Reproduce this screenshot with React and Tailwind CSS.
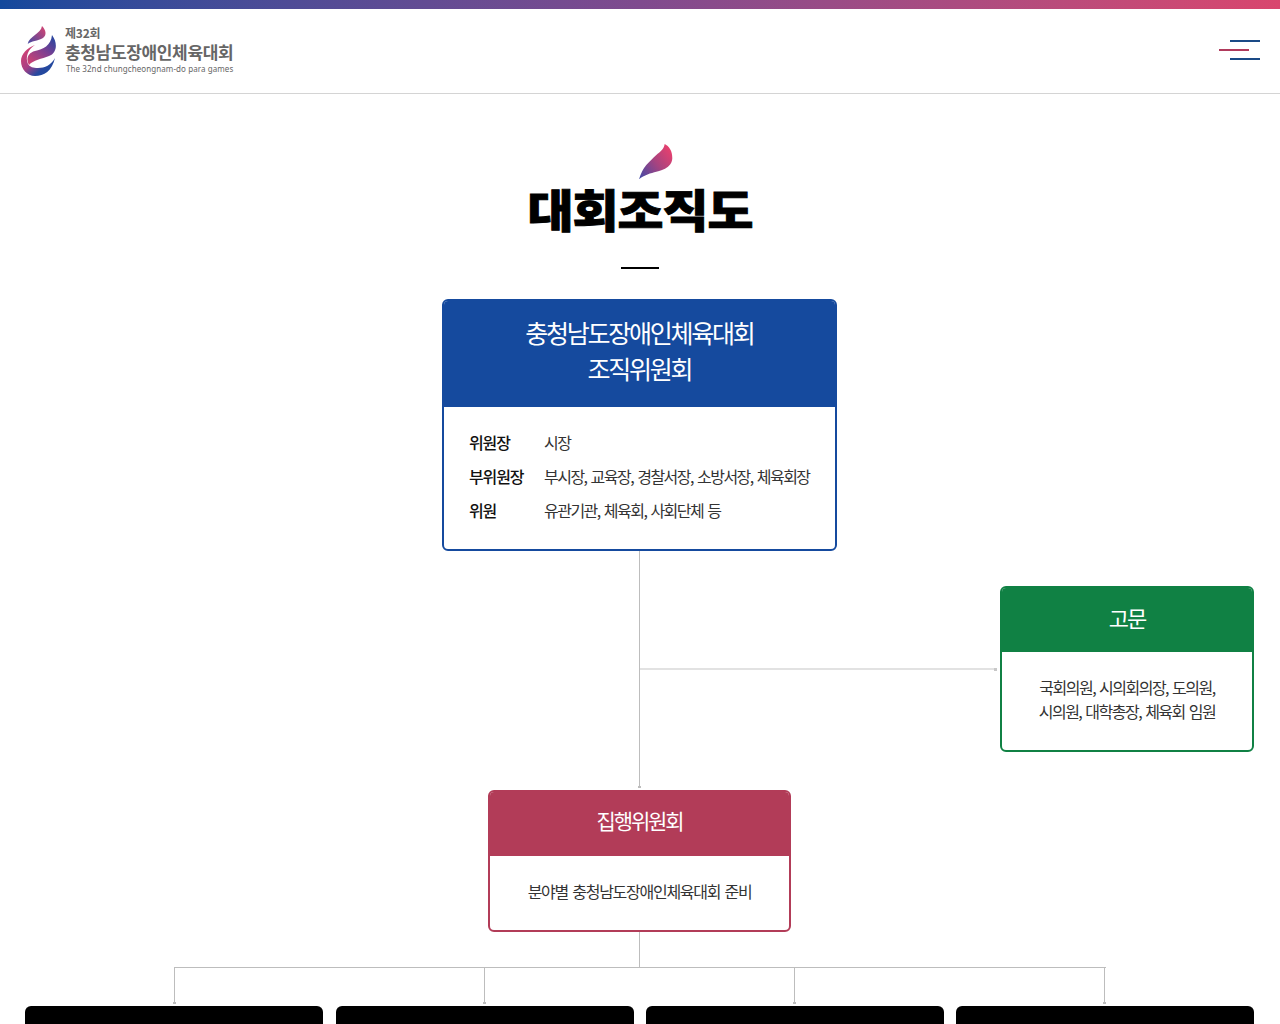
import React from 'react';

const font = { fontFamily: '"Noto Sans CJK KR", "Noto Sans", sans-serif' };

const FlameLogo = () => (
  <svg viewBox="0 0 36 50" className="w-[36px] h-[50px] shrink-0">
    <defs>
      <linearGradient id="lg1" x1="0" y1="1" x2="1" y2="0">
        <stop offset="0" stopColor="#3f4aa3" />
        <stop offset="1" stopColor="#dc4470" />
      </linearGradient>
      <linearGradient id="lg2" x1="0" y1="1" x2="0.8" y2="0">
        <stop offset="0" stopColor="#d9436f" />
        <stop offset="0.6" stopColor="#7a3f92" />
        <stop offset="1" stopColor="#2b469f" />
      </linearGradient>
      <linearGradient id="lg3" x1="0" y1="0" x2="1" y2="1">
        <stop offset="0" stopColor="#e0426e" />
        <stop offset="0.45" stopColor="#a83f84" />
        <stop offset="0.7" stopColor="#26489f" />
        <stop offset="1" stopColor="#1c4a9e" />
      </linearGradient>
    </defs>
    <path d="M21 0C25 4 26 9 22 12 17 15 10 15 6.7 18 8 10 20 8 21 0Z" fill="url(#lg1)" />
    <path d="M31 9C37 17 36 27 28 30 21 33 12 34 8 39 5 34 6 27 14 25 22 23 30 20 31 9Z" fill="url(#lg2)" />
    <path d="M14 19C6 22 0 28 0 35 0 43 6 50 14 50 23 50 31 45 34 32 30 39 24 42 17 42 12 42 9 41 7 38 4 31 7 23 14 19Z" fill="url(#lg3)" />
  </svg>
);

const SectionMark = () => (
  <svg viewBox="0 0 34 36" className="w-[34px] h-[36px] block">
    <defs>
      <linearGradient id="mark" x1="0" y1="1" x2="1" y2="0.2">
        <stop offset="0" stopColor="#3f4aa8" />
        <stop offset="0.55" stopColor="#a8437f" />
        <stop offset="1" stopColor="#e8406e" />
      </linearGradient>
    </defs>
    <path d="M25.7 0C30 2 33.5 7 33.3 14.3 33 19 31 21 29 22.7 25 26 21 26.5 17.3 27.7 12 29 5 31 0 35.3 2 29 4 25 7.3 21 11 17 14 14 17.3 11 21 8 25 5 25.7 0Z" fill="url(#mark)" />
  </svg>
);

const Row = ({ label, children }) => (
  <div className="flex h-[34px] items-center">
    <span className="w-[75px] shrink-0 text-[16px] font-medium tracking-[-0.07em] text-[#111]">{label}</span>
    <span className="text-[16px] tracking-[-0.095em] [word-spacing:2px] text-[#333] whitespace-nowrap">{children}</span>
  </div>
);

const Drop = () => (
  <div className="flex flex-col items-center w-[298px]">
    <div className="w-px h-[34px] bg-[#bdbdbd]" />
    <div className="w-[3px] h-[2px] bg-[#bdbdbd]" />
  </div>
);

const App = () => (
  <div style={font} className="h-[1024px] overflow-hidden bg-white">
    <div className="h-[9px] bg-gradient-to-r from-[#12499c] via-[#7f4a8e] to-[#d9466e]" />
    <header className="h-[85px] border-b border-[#d4d4d4] flex items-center justify-between pl-[21px] pr-[20px]">
      <div className="flex items-center gap-[8px]">
        <FlameLogo />
        <div className="flex flex-col text-[#666] -mt-[2px]">
          <span className="text-[12px] leading-[13px] font-bold tracking-[-0.02em] mb-[2px] mt-[1px]">제32회</span>
          <span className="text-[17px] leading-[22px] font-bold tracking-[-0.02em] whitespace-nowrap">충청남도장애인체육대회</span>
          <span className="text-[8px] leading-[12px] ml-[1px] tracking-[0.01em] whitespace-nowrap" style={{ fontFamily: '"Noto Sans", sans-serif' }}>The 32nd chungcheongnam-do para games</span>
        </div>
      </div>
      <div className="flex flex-col items-end gap-[7px] -mt-[2px]">
        <div className="w-[30px] h-[2px] bg-[#1a4a86]" />
        <div className="w-[30px] h-[2px] bg-[#b03a5c] mr-[11px]" />
        <div className="w-[30px] h-[2px] bg-[#1a4a86]" />
      </div>
    </header>

    <div className="flex flex-col items-center pt-[50px]">
      <div className="ml-[32px]">
        <SectionMark />
      </div>
      <h1 className="text-[50px] leading-[60px] font-black text-black tracking-[-0.02em] -mt-[2px] scale-y-[0.9] [-webkit-text-stroke:1px_black]">대회조직도</h1>
      <div className="w-[38px] h-[2px] bg-black mt-[29px]" />
    </div>

    <div className="flex flex-col items-center mt-[30px] pr-[1px]">
      <section className="w-[395px] h-[252px] rounded-[6px] border-2 border-[#154a9e] overflow-hidden">
        <div className="h-[106px] pb-[8px] bg-[#154a9e] text-white text-[25px] leading-[36px] tracking-[-0.09em] flex flex-col items-center justify-center">
          <div>충청남도장애인체육대회</div>
          <div>조직위원회</div>
        </div>
        <div className="pt-[18px] pl-[25px]">
          <Row label="위원장">시장</Row>
          <Row label="부위원장">부시장, 교육장, 경찰서장, 소방서장, 체육회장</Row>
          <Row label="위원">유관기관, 체육회, 사회단체 등</Row>
        </div>
      </section>
    </div>

    <div className="flex h-[239px]">
      <div className="w-[639px] shrink-0" />
      <div className="flex flex-col items-center w-px shrink-0">
        <div className="w-px h-[235px] shrink-0 bg-[#bdbdbd]" />
        <div className="w-[3px] h-[2px] shrink-0 bg-[#bdbdbd]" />
      </div>
      <div className="flex items-start pt-[35px]">
        <div className="flex items-center h-[166px] w-[360px] shrink-0">
          <div className="w-[354px] h-[2px] bg-[#e2e2e2] shrink-0" />
          <div className="w-[3px] h-[3px] bg-[#c8c8c8] shrink-0" />
        </div>
        <section className="w-[254px] h-[166px] shrink-0 rounded-[6px] border-2 border-[#108144] overflow-hidden">
          <div className="h-[64px] pb-[6px] bg-[#108144] text-white text-[22px] tracking-[-0.09em] flex items-center justify-center">고문</div>
          <div className="pt-[23px] text-center text-[16px] leading-[24px] tracking-[-0.095em] [word-spacing:2px] text-[#333] whitespace-nowrap">
            <div>국회의원, 시의회의장, 도의원,</div>
            <div>시의원, 대학총장, 체육회 임원</div>
          </div>
        </section>
      </div>
    </div>

    <div className="flex flex-col items-center pr-[1px]">
      <section className="w-[303px] h-[142px] rounded-[6px] border-2 border-[#b23c58] overflow-hidden">
        <div className="h-[64px] pb-[6px] bg-[#b23c58] text-white text-[21px] tracking-[-0.1em] flex items-center justify-center">집행위원회</div>
        <div className="h-[72px] pb-[2px] text-[16px] tracking-[-0.08em] [word-spacing:2px] text-[#333] flex items-center justify-center whitespace-nowrap">분야별 충청남도장애인체육대회 준비</div>
      </section>
      <div className="w-px h-[35px] bg-[#bdbdbd]" />
    </div>

    <div className="mx-[174px] w-[932px] h-px bg-[#bdbdbd]" />
    <div className="flex pl-[25px] gap-[12px]">
      <Drop />
      <Drop />
      <Drop />
      <Drop />
    </div>
    <div className="flex pl-[25px] gap-[12px] mt-[2px]">
      <div className="w-[298px] h-[40px] bg-black rounded-t-[6px]" />
      <div className="w-[298px] h-[40px] bg-black rounded-t-[6px] ml-[1px]" />
      <div className="w-[298px] h-[40px] bg-black rounded-t-[6px]" />
      <div className="w-[298px] h-[40px] bg-black rounded-t-[6px]" />
    </div>
  </div>
);

export default App;
